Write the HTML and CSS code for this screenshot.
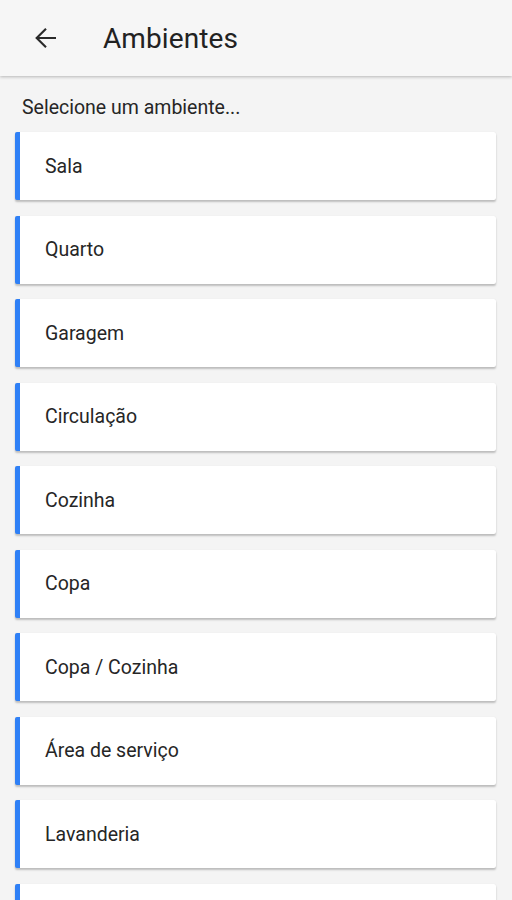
FILE: index.html
```html
<!DOCTYPE html>
<html lang="pt-BR">
<head>
    <meta charset="UTF-8">
    <meta name="viewport" content="width=device-width, initial-scale=1.0">
    <title>Ambientes</title>
    <link rel="stylesheet" href="styles.css">
</head>
<body>
    <div class="header">
        <span class="back">
            <svg width="32" height="32" viewBox="0 0 24 24"><path d="M19.5 12H5 M12 5l-7 7 7 7" fill="none" stroke="#2a2a2a" stroke-width="1.6"/></svg>
        </span>
        <div class="title">Ambientes</div>
    </div>

    <div class="content">
        <div class="hint">Selecione um ambiente...</div>
        <div class="list">
            <div class="item">Sala</div>
            <div class="item">Quarto</div>
            <div class="item">Garagem</div>
            <div class="item">Circulação</div>
            <div class="item">Cozinha</div>
            <div class="item">Copa</div>
            <div class="item">Copa / Cozinha</div>
            <div class="item">Área de serviço</div>
            <div class="item">Lavanderia</div>
            <div class="item"></div>
        </div>
    </div>
</body>
</html>
```

FILE: styles.css
```css
body {
    font-family: Roboto, "Noto Sans", Arial, sans-serif;
    background-color: #f4f4f4;
    margin: 0;
    height: 900px;
    overflow: hidden;
}
.header {
    height: 76px;
    background: #f6f6f6;
    display: flex;
    align-items: center;
    box-shadow: 0 1px 3px rgba(0, 0, 0, 0.25);
    position: relative;
}
.back {
    width: 32px;
    height: 32px;
    margin-left: 30px;
    display: flex;
}
.title {
    font-size: 28px;
    font-weight: 400;
    color: #222;
    margin-left: 41px;
    letter-spacing: 0.1px;
}
.content {
    padding: 20px 16px 0 15px;
}
.hint {
    font-size: 19.5px;
    color: #262626;
    margin-left: 7px;
    margin-bottom: 13px;
}
.list {
    display: flex;
    flex-direction: column;
    gap: 15.5px;
}
.item {
    height: 68px;
    background: white;
    border-left: 5px solid #2f80f6;
    border-radius: 2px;
    box-shadow: 0 2px 2px rgba(0, 0, 0, 0.22), 0 0 1px rgba(0, 0, 0, 0.1);
    display: flex;
    align-items: center;
    padding-left: 25px;
    font-size: 19.5px;
    color: #262626;
    flex-shrink: 0;
}
```
